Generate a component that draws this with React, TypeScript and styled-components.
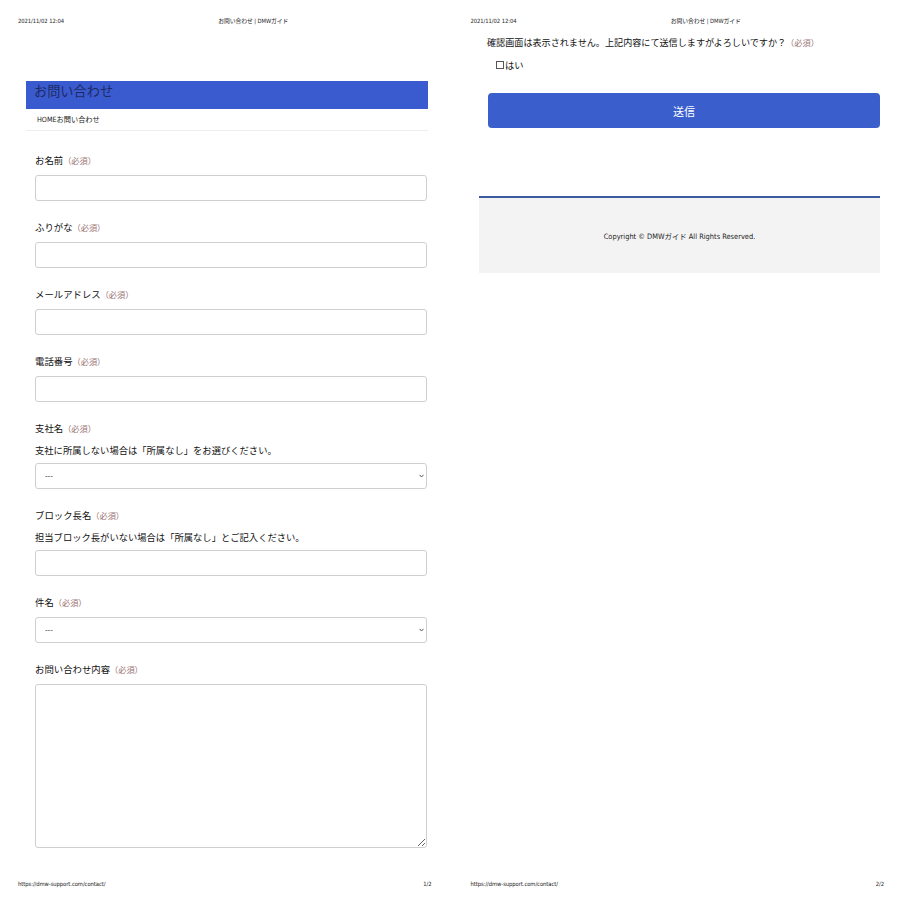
import React from 'react';
import styled, { createGlobalStyle } from 'styled-components';

const GlobalStyle = createGlobalStyle`
  html, body {
    margin: 0;
    padding: 0;
    background: #ffffff;
  }

  body {
    font-family: "Noto Sans CJK JP", "Noto Sans", sans-serif;
    color: #1a1a1a;
  }

  * {
    box-sizing: border-box;
  }
`;

const narrow = '"Liberation Sans Narrow", "DejaVu Sans Condensed", "Liberation Sans", "Noto Sans CJK JP", sans-serif';

const Sheet = styled.div`
  display: flex;
  width: 905px;
  height: 905px;
  overflow: hidden;
`;

const Page = styled.section`
  display: flex;
  flex-direction: column;
  width: 452.5px;
  height: 905px;
`;

const PrintHeader = styled.header`
  display: flex;
  height: 35px;
  padding: 17px 18px 0 18px;
  font-family: ${narrow};
  font-size: 5.8px;
  letter-spacing: -0.05px;
  line-height: 8px;
  color: #222222;
  white-space: nowrap;
`;

const PrintTitle = styled.span`
  flex: 1;
  margin-left: 8px;
  text-align: center;
`;

const PrintFooter = styled.footer`
  display: flex;
  justify-content: space-between;
  margin-top: auto;
  padding: 0 21px 17px 18px;
  font-family: ${narrow};
  font-size: 5.8px;
  letter-spacing: -0.05px;
  line-height: 8px;
  color: #222222;
`;

const Container = styled.div<{ $left: number }>`
  margin-left: ${(p) => p.$left}px;
  width: 402px;
`;

const TitleBar = styled.h1`
  margin: 46px 0 0;
  height: 28px;
  padding: 1px 8px 0;
  background: #3a5bcf;
  color: #1d2a66;
  font-size: 13.2px;
  font-weight: 400;
  line-height: 17px;
`;

const Breadcrumb = styled.div`
  height: 22px;
  padding-left: 11px;
  border-bottom: 1px solid #eeeeee;
  font-family: ${narrow};
  font-size: 7.2px;
  line-height: 22px;
  color: #222222;
`;

const Form = styled.form`
  display: flex;
  flex-direction: column;
  gap: 19px;
  padding: 22px 1px 0 9px;
`;

const Field = styled.div`
  display: flex;
  flex-direction: column;
`;

const Label = styled.label`
  display: block;
  height: 14px;
  margin-bottom: 8px;
  font-size: 9.4px;
  line-height: 14px;
  color: #111111;
  white-space: nowrap;
`;

const Required = styled.span`
  font-size: 8.2px;
  line-height: 14px;
  color: #9a7474;
`;

const Note = styled.p`
  height: 14px;
  margin: 0 0 6px;
  font-size: 9.3px;
  line-height: 14px;
  color: #111111;
  white-space: nowrap;
`;

const TextInput = styled.input`
  display: block;
  height: 26px;
  width: 100%;
  border: 1px solid #cfcfcf;
  border-radius: 3px;
  background: #ffffff;
  outline: none;
`;

const SelectWrap = styled.div`
  position: relative;
  height: 26px;
`;

const Select = styled.select`
  display: block;
  appearance: none;
  height: 26px;
  width: 100%;
  padding: 0 9px;
  border: 1px solid #cfcfcf;
  border-radius: 3px;
  background: #ffffff;
  font-family: ${narrow};
  font-size: 8px;
  color: #555555;
  outline: none;
`;

const Chevron = styled.svg`
  position: absolute;
  right: 3px;
  top: 11px;
  width: 5px;
  height: 4px;
  pointer-events: none;
`;

const TextArea = styled.textarea`
  display: block;
  height: 164px;
  width: 100%;
  border: 1px solid #cfcfcf;
  border-radius: 3px;
  background: #ffffff;
  outline: none;
  resize: vertical;
`;

const ConfirmBlock = styled.div`
  padding: 0 0 0 8px;
`;

const ConfirmText = styled.p`
  height: 14px;
  margin: 0;
  font-size: 9.1px;
  line-height: 14px;
  color: #111111;
  white-space: nowrap;
`;

const Agree = styled.label`
  display: flex;
  align-items: center;
  height: 14px;
  margin: 9px 0 0 9px;
  font-size: 9.3px;
  line-height: 14px;
  color: #111111;
`;

const Box = styled.input`
  appearance: none;
  width: 8px;
  height: 8px;
  margin: 0 1px 0 0;
  border: 1px solid #555555;
  background: #ffffff;
`;

const SubmitButton = styled.button`
  display: block;
  width: 392px;
  height: 35px;
  margin: 21px 0 0 1px;
  border: none;
  border-radius: 4px;
  background: #3a5fcd;
  color: #ffffff;
  font-family: "Noto Sans CJK JP", sans-serif;
  font-size: 11px;
`;

const SiteFooter = styled.div`
  display: flex;
  align-items: center;
  justify-content: center;
  margin-top: 68px;
  width: 401px;
  height: 77px;
  border-top: 2px solid #3b5a9c;
  background: #f3f3f3;
  font-family: ${narrow};
  font-size: 7.4px;
  color: #222222;
`;

type FieldDef = {
  label: string;
  note?: string;
  kind: 'text' | 'select' | 'textarea';
};

const fields: FieldDef[] = [
  { label: 'お名前', kind: 'text' },
  { label: 'ふりがな', kind: 'text' },
  { label: 'メールアドレス', kind: 'text' },
  { label: '電話番号', kind: 'text' },
  { label: '支社名', note: '支社に所属しない場合は「所属なし」をお選びください。', kind: 'select' },
  { label: 'ブロック長名', note: '担当ブロック長がいない場合は「所属なし」とご記入ください。', kind: 'text' },
  { label: '件名', kind: 'select' },
  { label: 'お問い合わせ内容', kind: 'textarea' }
];

const Control: React.FC<{ kind: FieldDef['kind'] }> = ({ kind }) => {
  if (kind === 'select') {
    return (
      <SelectWrap>
        <Select defaultValue=''>
          <option value=''>---</option>
        </Select>
        <Chevron viewBox='0 0 5 4'>
          <path d='M0.5 0.8 L2.5 3 L4.5 0.8' fill='none' stroke='#444' strokeWidth='0.9' />
        </Chevron>
      </SelectWrap>
    );
  }

  if (kind === 'textarea') {
    return <TextArea />;
  }

  return <TextInput type='text' />;
};

const Header: React.FC = () => (
  <PrintHeader>
    <span>2021/11/02 12:04</span>
    <PrintTitle>お問い合わせ | DMWガイド</PrintTitle>
  </PrintHeader>
);

const App: React.FC = () => {
  return (
    <>
      <GlobalStyle />
      <Sheet>
        <Page>
          <Header />
          <Container $left={26}>
            <TitleBar>お問い合わせ</TitleBar>
            <Breadcrumb>HOMEお問い合わせ</Breadcrumb>
            <Form>
              {fields.map((f) => (
                <Field key={f.label}>
                  <Label>
                    {f.label}
                    <Required>（必須）</Required>
                  </Label>
                  {f.note && <Note>{f.note}</Note>}
                  <Control kind={f.kind} />
                </Field>
              ))}
            </Form>
          </Container>
          <PrintFooter>
            <span>https://dmw-support.com/contact/</span>
            <span>1/2</span>
          </PrintFooter>
        </Page>
        <Page>
          <Header />
          <Container $left={26.5}>
            <ConfirmBlock>
              <ConfirmText>
                確認画面は表示されません。上記内容にて送信しますがよろしいですか？
                <Required>（必須）</Required>
              </ConfirmText>
              <Agree>
                <Box type='checkbox' />
                はい
              </Agree>
              <SubmitButton type='button'>送信</SubmitButton>
            </ConfirmBlock>
            <SiteFooter>Copyright © DMWガイド All Rights Reserved.</SiteFooter>
          </Container>
          <PrintFooter>
            <span>https://dmw-support.com/contact/</span>
            <span>2/2</span>
          </PrintFooter>
        </Page>
      </Sheet>
    </>
  );
};

export default App;
